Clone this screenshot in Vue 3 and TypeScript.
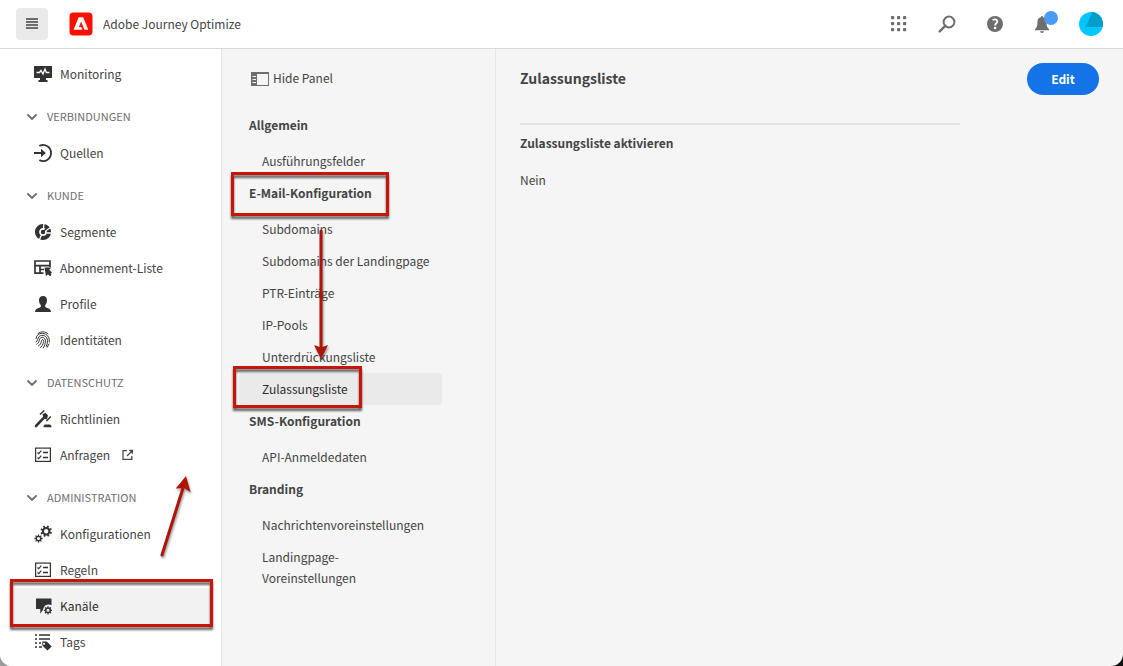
<script setup lang="ts">
interface NavItem {
  label: string
  icon: string
  external?: boolean
  active?: boolean
}
interface NavGroup {
  title?: string
  items: NavItem[]
}
interface PanelItem {
  label: string
  active?: boolean
}
interface PanelGroup {
  title: string
  marked?: boolean
  items: PanelItem[]
}

const navGroups: NavGroup[] = [
  { items: [{ label: 'Monitoring', icon: 'monitor' }] },
  { title: 'VERBINDUNGEN', items: [{ label: 'Quellen', icon: 'login' }] },
  {
    title: 'KUNDE',
    items: [
      { label: 'Segmente', icon: 'segment' },
      { label: 'Abonnement-Liste', icon: 'subscription' },
      { label: 'Profile', icon: 'user' },
      { label: 'Identitäten', icon: 'fingerprint' },
    ],
  },
  {
    title: 'DATENSCHUTZ',
    items: [
      { label: 'Richtlinien', icon: 'gavel' },
      { label: 'Anfragen', icon: 'checklist', external: true },
    ],
  },
  {
    title: 'ADMINISTRATION',
    items: [
      { label: 'Konfigurationen', icon: 'gears' },
      { label: 'Regeln', icon: 'checklist' },
      { label: 'Kanäle', icon: 'channel', active: true },
      { label: 'Tags', icon: 'tags' },
    ],
  },
]

const panelGroups: PanelGroup[] = [
  { title: 'Allgemein', items: [{ label: 'Ausführungsfelder' }] },
  {
    title: 'E-Mail-Konfiguration',
    marked: true,
    items: [
      { label: 'Subdomains' },
      { label: 'Subdomains der Landingpage' },
      { label: 'PTR-Einträge' },
      { label: 'IP-Pools' },
      { label: 'Unterdrückungsliste' },
      { label: 'Zulassungsliste', active: true },
    ],
  },
  { title: 'SMS-Konfiguration', items: [{ label: 'API-Anmeldedaten' }] },
  {
    title: 'Branding',
    items: [{ label: 'Nachrichtenvoreinstellungen' }, { label: 'Landingpage-Voreinstellungen' }],
  },
]

const dots = [2, 8, 14]
const teeth = [0, 45, 90, 135, 180, 225, 270, 315]
</script>

<template>
  <div class="app">
    <header class="topbar">
      <button class="menu" type="button" aria-label="Menü">
        <svg width="12" height="12" viewBox="0 0 12 12">
          <path d="M0 1h12M0 4h12M0 7h12M0 10h12" stroke="#444" stroke-width="1.5" />
        </svg>
      </button>
      <a class="brand" href="#">
        <svg width="24" height="24" viewBox="0 0 24 24">
          <rect x=".5" y=".5" width="23" height="23" rx="4" fill="#fa0f00" />
          <path d="M9.7 5.3h4.5l5.1 12.5h-3.9l-3.3-8.3-2.2 5.5h2.4l1.1 2.8H4.6z" fill="#fff" />
        </svg>
        <span class="label">Adobe Journey Optimize</span>
      </a>
      <div class="tools">
        <button type="button" aria-label="Apps">
          <svg width="18" height="18" viewBox="0 0 18 18" fill="#6e6e6e">
            <template v-for="y in dots" :key="y">
              <rect v-for="x in dots" :key="x" :x="x - 1" :y="y - 1" width="3.2" height="3.2" rx=".7" />
            </template>
          </svg>
        </button>
        <button type="button" aria-label="Suche">
          <svg width="18" height="18" viewBox="0 0 18 18" fill="none" stroke="#6e6e6e">
            <circle cx="11" cy="7" r="5.4" stroke-width="2" />
            <path d="M7.2 10.8l-5.5 5.6" stroke-width="2.4" stroke-linecap="round" />
          </svg>
        </button>
        <button type="button" aria-label="Hilfe">
          <svg width="18" height="18" viewBox="0 0 18 18">
            <circle cx="9" cy="9" r="8" fill="#6e6e6e" />
            <path d="M6.6 5.1C8.3 3.9 11.3 4 11.3 6.4c0 1.9-2.2 2-2.2 4" fill="none" stroke="#fff" stroke-width="1.9" />
            <circle cx="9.1" cy="13" r="1.3" fill="#fff" />
          </svg>
        </button>
        <button type="button" aria-label="Benachrichtigungen">
          <svg width="18" height="18" viewBox="0 0 18 18" fill="#6e6e6e">
            <path d="M7 2.200C7 .600 9 .600 9 2.200c3 .600 3.600 3 3.600 5.600 0 3.700.700 4.500 2.400 6.500v.900H1v-.900c1.700-2 2.400-2.800 2.400-6.500C3.400 5.200 4 2.800 7 2.200z" />
            <path d="M6 16.200h4c-.2 1-1 1.700-2 1.700s-1.800-.7-2-1.700z" />
          </svg>
          <span class="dot"></span>
        </button>
        <button type="button" aria-label="Profil">
          <svg width="24" height="24" viewBox="0 0 24 24">
            <circle cx="12" cy="12" r="12" fill="#00c8ff" />
            <path d="M13.500.1L6.500 15H23.600A12 12 0 0 0 13.500.1z" fill="#009dc9" />
          </svg>
        </button>
      </div>
    </header>

    <div class="body">
      <nav class="sidebar" aria-label="Hauptnavigation">
        <section v-for="(group, gi) in navGroups" :key="gi">
          <button v-if="group.title" class="group" type="button">
            <svg width="10" height="6" viewBox="0 0 10 6">
              <path d="M1 1l4 4 4-4" fill="none" stroke="#6e6e6e" stroke-width="1.800" stroke-linecap="round" />
            </svg>
            <span class="label">{{ group.title }}</span>
          </button>
          <a v-for="item in group.items" :key="item.label" class="nav" :class="{ active: item.active }" href="#">
            <svg class="icon" width="18" height="18" viewBox="0 0 18 18" fill="#323232">
              <template v-if="item.icon === 'monitor'">
                <path d="M0 1h18v12h-6v2h1.500v2h-9v-2H6v-2H0z" />
                <path d="M2.500 7.500h3L7 5.500l2 3.500 2-5 1.300 3.500h3.200" fill="none" stroke="#fff" stroke-width="1.300" />
              </template>
              <template v-else-if="item.icon === 'login'">
                <path d="M6 1.600A8 8 0 1 1 6 16.400" fill="none" stroke="#323232" stroke-width="1.800" stroke-linecap="round" />
                <path d="M0 8h7V4.800L11.800 9 7 13.200V10H0z" />
              </template>
              <template v-else-if="item.icon === 'segment'">
                <circle cx="9" cy="9" r="6" fill="none" stroke="#323232" stroke-width="4.200" />
                <path d="M9.500 5.500L9.900.5M12 7.500l5.500-3.500M12.500 10h5M7.500 12L5 17.500" stroke="#fff" stroke-width="1.300" fill="none" />
                <circle cx="9" cy="9" r="2.200" />
                <path d="M9 9l3.500-3.500" stroke="#323232" stroke-width="1.500" />
              </template>
              <template v-else-if="item.icon === 'subscription'">
                <path d="M9.500 14.200H1V2h15v6M1 6.700h15M6 6.700v7.500M6 10.500h4" fill="none" stroke="#323232" stroke-width="1.700" />
                <path d="M10.500 8.500h7l-2.300 2.200 2.800 2.800-1.400 1.200 1 1-1.600 1.600-2-2-2 2z" />
              </template>
              <template v-else-if="item.icon === 'user'">
                <path d="M9 1c2.600 0 4 1.900 4 4.300 0 2.200-.8 3.700-1.800 4.800v1.300c0 .5.300.8.800 1 3 .8 5 1.700 5 4.600H1c0-2.900 2-3.800 5-4.600.500-.2.800-.5.800-1v-1.300C5.800 9 5 7.500 5 5.300 5 2.900 6.400 1 9 1z" />
              </template>
              <template v-else-if="item.icon === 'fingerprint'">
                <g fill="none" stroke="#323232" stroke-width="1" stroke-linecap="round">
                  <path d="M4 2.500C7 .2 11.500.2 14 3" />
                  <path d="M2 7.500C3 2.200 8 1.500 11.500 3.200c3 1.600 4.200 4.300 3.800 7.800" />
                  <path d="M2 11c2.500-1.500 1.200-3.500 3.200-5.500 3-2.600 8.300-.5 8.300 4.200 0 2.300-.5 4-1.200 5.600" />
                  <path d="M2.700 13.200C6.200 11.500 4.500 8.800 6.400 7c2-1.600 5 0 5 3 0 2.500-.9 5-2 7" />
                  <path d="M4.500 14.800C8.500 12.500 6.700 9.500 8.200 8.600c1.700-.4 1.500 2.400.9 4.100C8.500 14.300 7.500 15.700 6.500 16.500" />
                  <path d="M15 13l-1.800 3.200" />
                </g>
              </template>
              <template v-else-if="item.icon === 'gavel'">
                <path d="M2 16L9.500 8.200" stroke="#323232" stroke-width="2.600" stroke-linecap="round" />
                <path d="M8.500 4.200l3-1.500 2.500 2.700-1.200 4-3.300-1z" />
                <path d="M6 4.500l4.300-4M12.500 11l4.300-4.500" stroke="#323232" stroke-width="1.500" />
                <path d="M9.500 17.200c0-1.500.6-2.700 2-2.700h4c1.400 0 2 1.200 2 2.700z" />
              </template>
              <template v-else-if="item.icon === 'checklist'">
                <rect x="1.600" y="2.100" width="14.800" height="13.300" fill="none" stroke="#323232" stroke-width="1.200" />
                <path d="M3.500 6.500l1.200 1.200L7.300 4.600M3.500 11.500l1.200 1.200 2.600-3.100" fill="none" stroke="#323232" stroke-width="1.100" />
                <path d="M9 6.500h5M9 11.500h5" stroke="#323232" stroke-width="1.600" />
              </template>
              <template v-else-if="item.icon === 'gears'">
                <g fill="none" stroke="#323232">
                  <circle cx="12.200" cy="6.200" r="3.200" stroke-width="2" />
                  <circle cx="4.500" cy="13.500" r="2.200" stroke-width="1.300" />
                  <path v-for="a in teeth" :key="a" d="M12.200 2.700V.4" stroke-width="1.800" :transform="`rotate(${a + 20} 12.200 6.200)`" />
                  <path v-for="a in teeth" :key="'s' + a" d="M4.500 11V9.400" stroke-width="1.300" :transform="`rotate(${a} 4.500 13.500)`" />
                </g>
              </template>
              <template v-else-if="item.icon === 'channel'">
                <path d="M2.500 1.500H17q.5 0 .5.500v6.200a5.500 5.500 0 0 0-8.300 4.400L6.300 16.800V12H2.500q-.5 0-.5-.5V2q0-.5.500-.5z" />
                <g fill="none" stroke="#323232">
                  <circle cx="14" cy="13.300" r="2.300" stroke-width="1.500" />
                  <path v-for="a in teeth" :key="a" d="M14 10.800V9.200" stroke-width="1.300" :transform="`rotate(${a} 14 13.300)`" />
                </g>
              </template>
              <template v-else>
                <path d="M1 2h2M1 6h2M1 10h2M1 14h2M5 2h11M5 6h11M5 10h2M5 14h3" stroke="#323232" stroke-width="1.600" />
                <path fill-rule="evenodd" d="M8.300 8.500h4.400l5 4.900-4.200 4.200-5.200-5zM10 9.800a1 1 0 1 0 .1 0z" />
              </template>
            </svg>
            <span class="label">{{ item.label }}</span>
            <svg v-if="item.external" class="external" width="12" height="12" viewBox="0 0 12 12" fill="none" stroke="#4b4b4b" stroke-width="1.300">
              <path d="M5 1.700H1v8.700h8.800V7M5 7l5-5" />
              <path d="M6.500.8H11V5.500z" fill="#4b4b4b" stroke="none" />
            </svg>
            <span v-if="item.active" class="mark mark-nav"></span>
          </a>
        </section>
        <svg class="arrow arrow-nav" width="40" height="90" viewBox="0 0 40 90">
          <path d="M8 81L29 14" stroke="#b01408" stroke-width="3" stroke-linecap="round" />
          <path d="M32 2l4.500 16-6.500-4-8.300.5z" fill="#b01408" />
        </svg>
      </nav>

      <aside class="panel">
        <button class="hide" type="button">
          <svg width="18" height="14" viewBox="0 0 18 14">
            <rect x=".5" y=".5" width="17" height="13" fill="none" stroke="#6e6e6e" />
            <path d="M0 0h6v14H0zM0 0h18v2H0z" fill="#6e6e6e" />
            <path d="M1.500 4.500H5M1.500 7.500H5M1.500 10.500H5" stroke="#f5f5f5" />
          </svg>
          <span class="label">Hide Panel</span>
        </button>
        <section v-for="group in panelGroups" :key="group.title">
          <h2>
            {{ group.title }}
            <span v-if="group.marked" class="mark mark-heading"></span>
          </h2>
          <a v-for="item in group.items" :key="item.label" class="entry" :class="{ active: item.active }" href="#">
            {{ item.label }}
            <span v-if="item.active" class="mark mark-entry"></span>
          </a>
        </section>
        <svg class="arrow arrow-panel" width="24" height="136" viewBox="0 0 24 136">
          <path d="M12 3v118" stroke="#b01408" stroke-width="3" stroke-linecap="round" />
          <path d="M12 131L5 117l7 2.500 7-2.500z" fill="#b01408" />
        </svg>
      </aside>

      <main class="content">
        <div class="head">
          <h1 class="label">Zulassungsliste</h1>
          <button class="edit" type="button"><span class="label">Edit</span></button>
        </div>
        <dl class="fields">
          <dt>Zulassungsliste aktivieren</dt>
          <dd>Nein</dd>
        </dl>
      </main>
    </div>
  </div>
</template>

<style>
body {
  margin: 0;
  background: linear-gradient(90deg, #9a9a9a 50%, #111 50%);
}
</style>

<style scoped>
.app {
  display: flex;
  flex-direction: column;
  min-height: 100vh;
  overflow: hidden;
  border-radius: 0 0 12px 12px;
  background: #f5f5f5;
  color: #444;
  font-family: 'Noto Sans CJK SC', 'Noto Sans', sans-serif;
  font-size: 12px;
  line-height: 21px;
}
button {
  margin: 0;
  padding: 0;
  border: 0;
  background: none;
  color: inherit;
  font: inherit;
  cursor: pointer;
}
a {
  color: inherit;
  text-decoration: none;
}
svg {
  flex: none;
  display: block;
}
.label {
  display: block;
  padding-bottom: 2px;
}
.topbar {
  display: flex;
  align-items: center;
  height: 48px;
  padding: 0 8px 0 16px;
  border-bottom: 1px solid #d8d8d8;
  background: #fff;
}
.menu {
  display: grid;
  place-items: center;
  width: 32px;
  height: 32px;
  border-radius: 4px;
  background: #eaeaea;
}
.brand {
  display: flex;
  align-items: center;
  gap: 10px;
  margin-left: 21px;
}
.tools {
  display: flex;
  margin-left: auto;
}
.tools button {
  position: relative;
  display: grid;
  place-items: center;
  width: 48px;
  height: 48px;
}
.dot {
  position: absolute;
  top: 11px;
  left: 25px;
  width: 14px;
  height: 14px;
  border-radius: 50%;
  background: #4b9cf5;
}
.body {
  display: grid;
  grid-template-columns: 222px 274px 1fr;
  flex: 1;
}
.sidebar {
  position: relative;
  box-sizing: border-box;
  padding-top: 7px;
  border-right: 1px solid #e6e6e6;
  background: #fff;
}
.group {
  display: flex;
  align-items: center;
  gap: 10px;
  width: 100%;
  height: 36px;
  margin-top: 7px;
  padding-left: 27px;
  color: #6e6e6e;
  font-size: 11px;
}
.nav {
  position: relative;
  display: flex;
  align-items: center;
  gap: 8px;
  height: 36px;
  margin: 0 10px 0 12px;
  padding-left: 22px;
}
.nav.active {
  background: #f2f2f2;
  color: #2c2c2c;
}
.external {
  margin-left: 4px;
}
.panel {
  position: relative;
  box-sizing: border-box;
  padding: 18px 53px 24px 17px;
  border-right: 1px solid #e6e6e6;
}
.hide {
  display: flex;
  align-items: center;
  gap: 4px;
  margin: 0 0 19px 12px;
}
h1,
h2 {
  margin: 0;
  font-weight: 700;
}
h2 {
  position: relative;
  margin-bottom: 3px;
  padding: 5px 0 7px 10px;
  font-size: 12px;
}
.entry {
  position: relative;
  display: block;
  padding: 5px 10px 6px 23px;
  border-radius: 4px;
}
.entry.active {
  background: #eaeaea;
  color: #2c2c2c;
}
.content {
  padding: 14px 24px;
}
.head {
  display: flex;
  align-items: center;
  justify-content: space-between;
  margin-bottom: 28px;
}
h1 {
  font-size: 14px;
}
.edit {
  width: 72px;
  height: 32px;
  border-radius: 16px;
  background: #1473e6;
  color: #fff;
  font-weight: 700;
}
.fields {
  max-width: 440px;
  margin: 0;
  padding-top: 7px;
  border-top: 2px solid #e1e1e1;
}
dt {
  font-weight: 700;
}
dd {
  margin: 16px 0 0;
}
.mark {
  position: absolute;
  box-sizing: border-box;
  border: 3px solid #c6160a;
  filter: drop-shadow(0 3px 1px rgba(0, 0, 0, 0.6));
  pointer-events: none;
}
.mark-nav {
  inset: -9px -2px -3px -2px;
}
.mark-heading {
  inset: -5px 53px -6px -8px;
}
.mark-entry {
  inset: -7px 80px -3px -6px;
}
.arrow {
  position: absolute;
  filter: drop-shadow(1px 2px 1px rgba(0, 0, 0, 0.4));
  pointer-events: none;
}
.arrow-nav {
  top: 425px;
  left: 154px;
}
.arrow-panel {
  top: 179px;
  left: 87px;
}
</style>
